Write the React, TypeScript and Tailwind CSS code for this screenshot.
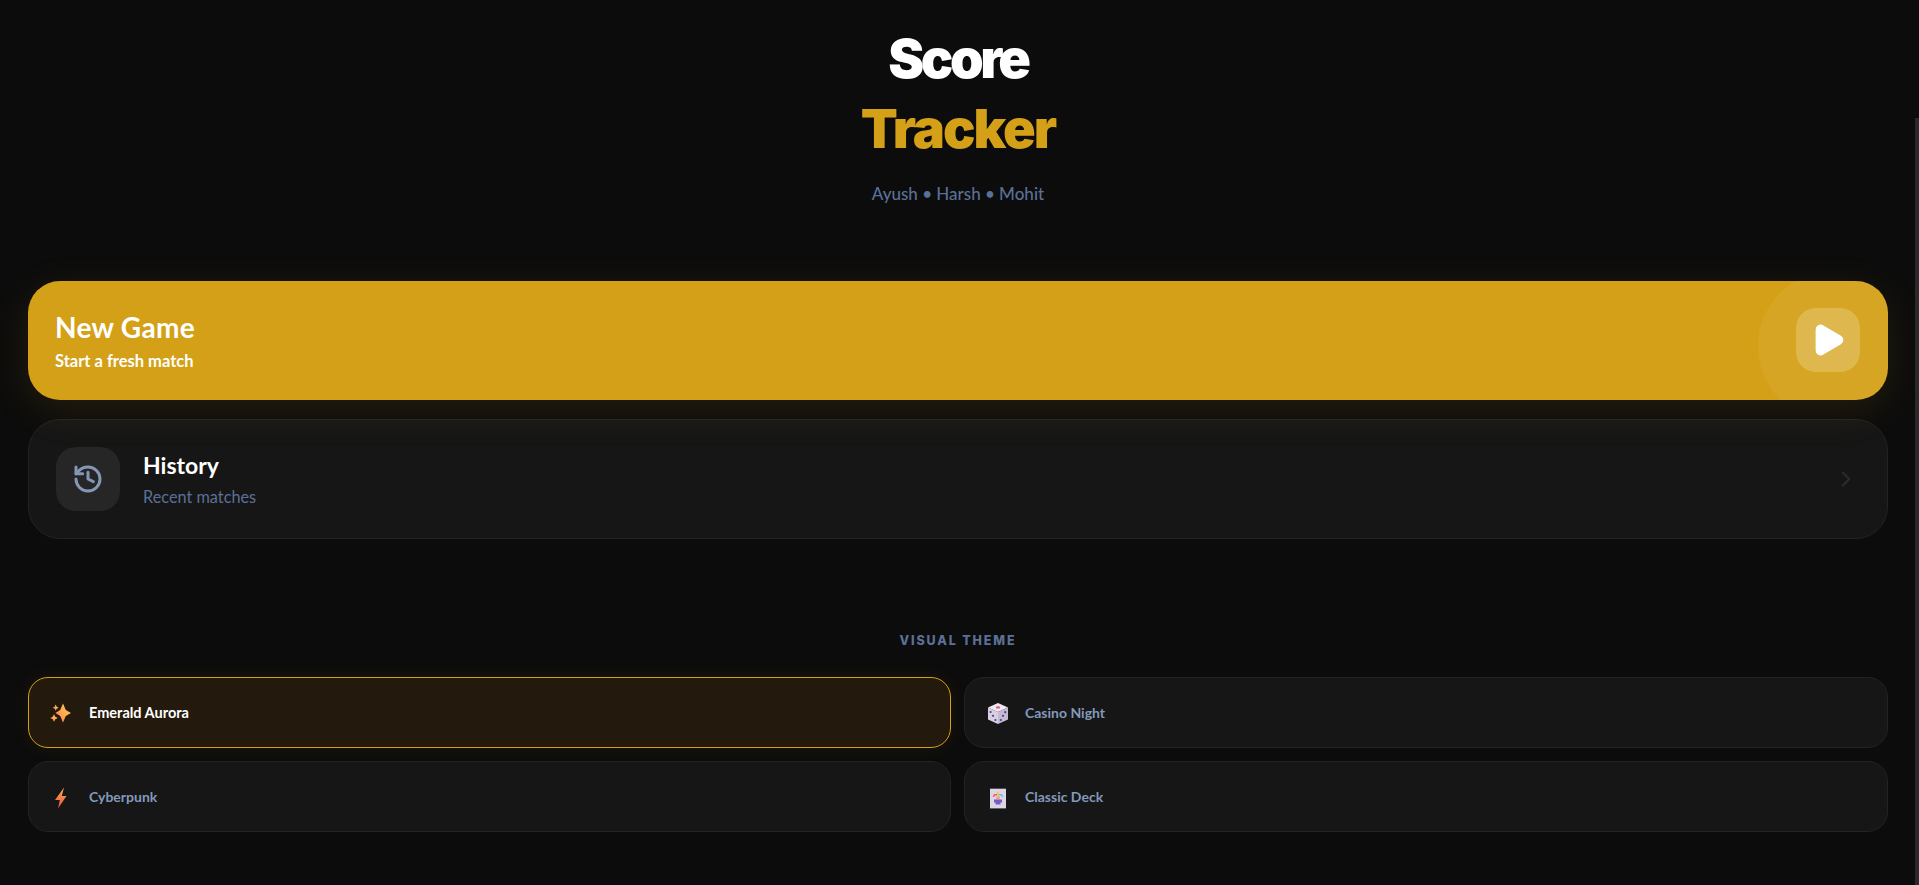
import { ChevronRight, History, Play } from 'lucide-react'

function SparklesIcon() {
  return (
    <svg width="24" height="24" viewBox="0 0 24 24">
      <defs>
        <linearGradient id="spark" x1="1" y1="0" x2="0" y2="1">
          <stop offset="0" stopColor="#ffd455" />
          <stop offset="0.6" stopColor="#ffa04f" />
          <stop offset="1" stopColor="#f5706f" />
        </linearGradient>
      </defs>
      <path fill="url(#spark)" d="M13 2.5 15.8 9 21 12 15.8 15 13 21.5 10.2 15 5.4 12 10.2 9Z" />
      <path fill="url(#spark)" d="M5.7 3.6 6.7 5.7 8.7 6.7 6.7 7.7 5.7 9.8 4.7 7.7 2.7 6.7 4.7 5.7Z" />
      <path fill="url(#spark)" d="M4 13.2 5.3 15.7 7.8 17 5.3 18.3 4 20.8 2.7 18.3 .2 17 2.7 15.7Z" />
    </svg>
  )
}

function DiceIcon() {
  return (
    <svg width="24" height="24" viewBox="0 0 24 24">
      <path fill="#efe9f2" d="M12 2 22 6.5 12 11 2 6.5Z" />
      <path fill="#d8d0e2" d="M2 6.5 12 11V23L2 18.5Z" />
      <path fill="#c4bad2" d="M22 6.5 12 11V23L22 18.5Z" />
      <ellipse cx="12" cy="6.4" rx="2.2" ry="1.2" fill="#f0567c" />
      <circle cx="4.6" cy="11" r="1.1" fill="#4f3d8f" />
      <circle cx="7" cy="14.8" r="1.1" fill="#4f3d8f" />
      <circle cx="9.4" cy="19" r="1.1" fill="#4f3d8f" />
      <circle cx="19.2" cy="11.2" r="1.1" fill="#4f3d8f" />
      <circle cx="17" cy="14.8" r="1.1" fill="#4f3d8f" />
      <circle cx="14.8" cy="19" r="1.1" fill="#4f3d8f" />
    </svg>
  )
}

function BoltIcon() {
  return (
    <svg width="24" height="24" viewBox="0 0 24 24">
      <defs>
        <linearGradient id="bolt" x1="0" y1="0" x2="0" y2="1">
          <stop offset="0" stopColor="#ffb14f" />
          <stop offset="1" stopColor="#e4503f" />
        </linearGradient>
      </defs>
      <path fill="url(#bolt)" d="M14 2.5 5 15H9.8L8 23.5 16.5 11H11.8Z" />
    </svg>
  )
}

function JokerIcon() {
  return (
    <svg width="24" height="24" viewBox="0 0 24 24">
      <rect x="4" y="3.7" width="16" height="19.7" fill="#dcd6e6" />
      <path fill="#f0577b" d="M6.5 12 8 9H11V10.5H9L8 12Z" />
      <path fill="#f6c945" d="M11 6.5H13V11.5H11Z" />
      <path fill="#5cc4ef" d="M13 9H16L17.5 12 16 12 15 10.5H13Z" />
      <rect x="10" y="11.5" width="4" height="3" fill="#f0a58c" />
      <path fill="#7a5cc0" d="M8 14.5H16V17.5H14.5V19.5H9.5V17.5H8Z" />
    </svg>
  )
}

const themes = [
  { name: 'Emerald Aurora', icon: <SparklesIcon />, active: true },
  { name: 'Casino Night', icon: <DiceIcon />, active: false },
  { name: 'Cyberpunk', icon: <BoltIcon />, active: false },
  { name: 'Classic Deck', icon: <JokerIcon />, active: false },
]

export default function App() {
  return (
    <div className="h-[885px] overflow-hidden bg-[#0c0c0c] font-['Lato','Noto_Sans',sans-serif] text-white flex">
      <div className="flex-1 min-w-0 pl-[28px] pr-[27px] pt-[24px]">
        {/* Title */}
        <div className="text-center">
          <h1 className="font-['Inter',sans-serif] text-[54px] leading-[70px] font-black tracking-[-2px]">
            <span className="tracking-[-3.5px]">Score</span><br />
            <span className="text-[#d4a017]">Tracker</span>
          </h1>
          <p className="mt-[18px] text-[17px] leading-[24px] font-medium text-[#5b7096]">Ayush • Harsh • Mohit</p>
        </div>

        {/* New game */}
        <div className="relative mt-[75px] h-[119px] rounded-[32px] bg-[#d4a017] overflow-hidden flex items-center justify-between shadow-[0_10px_40px_rgba(212,160,23,0.12)]">
          <div className="absolute right-[-20px] top-[-10px] w-[150px] h-[150px] rounded-full bg-white/5" />
          <div className="pl-[27px]">
            <div className="text-[28px] leading-[34px] font-bold tracking-[0.3px]">New Game</div>
            <div className="mt-[7px] text-[16.5px] leading-[20px] font-bold">Start a fresh match</div>
          </div>
          <div className="relative mr-[28px] mb-[1px] w-[64px] h-[64px] rounded-[20px] bg-white/20 flex items-center justify-center">
            <Play size={36} fill="white" stroke="white" strokeWidth={2.5} />
          </div>
        </div>

        {/* History */}
        <div className="mt-[19px] h-[120px] rounded-[32px] border border-[#232323] bg-[#161616] flex items-center justify-between pl-[27px] pr-[28px]">
          <div className="flex items-center gap-[23px]">
            <div className="w-[64px] h-[64px] rounded-[20px] bg-[#262626] flex items-center justify-center">
              <History size={32} color="#8497b5" strokeWidth={2.25} />
            </div>
            <div className="pb-[1px]">
              <div className="text-[23px] leading-[30px] font-bold">History</div>
              <div className="mt-[7px] text-[16.3px] leading-[20px] text-[#5b7096]">Recent matches</div>
            </div>
          </div>
          <ChevronRight size={26} color="#2b2b2b" />
        </div>

        {/* Themes */}
        <div className="mt-[93px] text-center font-['Inter',sans-serif] text-[12.5px] leading-[18px] font-extrabold tracking-[1.85px] text-[#5b7096]">VISUAL THEME</div>
        <div className="mt-[27px] grid grid-cols-[923px_1fr] gap-[13px]">
          {themes.map((t) => (
            <div
              key={t.name}
              className={
                t.active
                  ? 'h-[71px] rounded-[20px] border border-[#d4a017] bg-[#231a0d] flex items-center pl-[21px] gap-[15px] shadow-[0_0_20px_rgba(212,160,23,0.08)]'
                  : 'h-[71px] rounded-[20px] border border-[#232323] bg-[#161616] flex items-center pl-[21px] gap-[15px]'
              }
            >
              {t.icon}
              <span className={t.active ? 'text-[14.5px] font-bold text-white' : 'text-[14px] font-bold text-[#8399bb]'}>{t.name}</span>
            </div>
          ))}
        </div>
      </div>
      <div className="w-[4px] shrink-0 pt-[118px]">
        <div className="h-full bg-[#2a2a2a]" />
      </div>
    </div>
  )
}
